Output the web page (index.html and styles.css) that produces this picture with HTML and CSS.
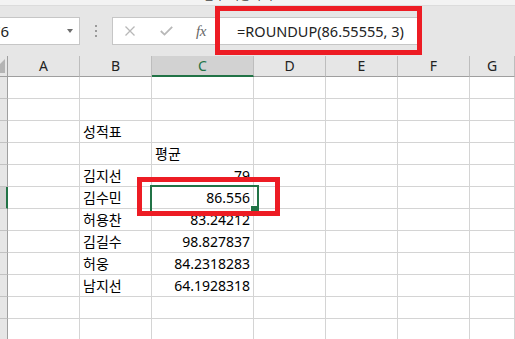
FILE: index.html
```html
<!DOCTYPE html>
<html lang="ko">
<head>
    <meta charset="UTF-8">
    <meta name="viewport" content="width=device-width, initial-scale=1.0">
    <title>ROUNDUP - Excel</title>
    <link rel="stylesheet" href="styles.css">
</head>
<body>
    <div class="titlebar">
        <span class="title">함수 사용하기 - Excel</span>
    </div>

    <div class="formula-bar">
        <div class="name-box">
            <span class="name-text">C6</span>
            <span class="drop"></span>
        </div>
        <div class="grip">
            <svg width="2" height="12" viewBox="0 0 2 12">
                <rect x="0" y="0" width="2" height="2" fill="#9a9a9a"/>
                <rect x="0" y="5" width="2" height="2" fill="#9a9a9a"/>
                <rect x="0" y="10" width="2" height="2" fill="#9a9a9a"/>
            </svg>
        </div>
        <div class="fx-box">
            <svg class="btn-cancel" width="10" height="10" viewBox="0 0 10 10">
                <path d="M0.5 0.5 L9.5 9.5 M9.5 0.5 L0.5 9.5" stroke="#b8b8b8" stroke-width="1.3" fill="none"/>
            </svg>
            <svg class="btn-enter" width="13" height="10" viewBox="0 0 13 10">
                <path d="M0.8 5 L4.5 8.6 L12.2 0.8" stroke="#b8b8b8" stroke-width="1.8" fill="none"/>
            </svg>
            <span class="btn-fx">fx</span>
        </div>
        <div class="formula-input">=ROUNDUP(86.55555, 3)</div>
    </div>

    <div class="sheet">
        <div class="hd corner">
            <svg width="8" height="20" viewBox="0 0 8 20">
                <polygon points="5,3 5,17 -9,17" fill="#b4b4b4"/>
            </svg>
        </div>
        <div class="hd">A</div>
        <div class="hd">B</div>
        <div class="hd active">C</div>
        <div class="hd">D</div>
        <div class="hd">E</div>
        <div class="hd">F</div>
        <div class="hd">G</div>

        <!-- row 1 -->
        <div class="rh"></div><div class="cell"></div><div class="cell"></div><div class="cell"></div><div class="cell"></div><div class="cell"></div><div class="cell"></div><div class="cell"></div>
        <!-- row 2 -->
        <div class="rh"></div><div class="cell"></div><div class="cell"></div><div class="cell"></div><div class="cell"></div><div class="cell"></div><div class="cell"></div><div class="cell"></div>
        <!-- row 3 -->
        <div class="rh"></div><div class="cell"></div><div class="cell">성적표</div><div class="cell"></div><div class="cell"></div><div class="cell"></div><div class="cell"></div><div class="cell"></div>
        <!-- row 4 -->
        <div class="rh"></div><div class="cell"></div><div class="cell"></div><div class="cell">평균</div><div class="cell"></div><div class="cell"></div><div class="cell"></div><div class="cell"></div>
        <!-- row 5 -->
        <div class="rh"></div><div class="cell"></div><div class="cell">김지선</div><div class="cell num">79</div><div class="cell"></div><div class="cell"></div><div class="cell"></div><div class="cell"></div>
        <!-- row 6 (selected) -->
        <div class="rh active"></div><div class="cell"></div><div class="cell">김수민</div><div class="cell num sel">86.556</div><div class="cell"></div><div class="cell"></div><div class="cell"></div><div class="cell"></div>
        <!-- row 7 -->
        <div class="rh"></div><div class="cell"></div><div class="cell">허용찬</div><div class="cell num">83.24212</div><div class="cell"></div><div class="cell"></div><div class="cell"></div><div class="cell"></div>
        <!-- row 8 -->
        <div class="rh"></div><div class="cell"></div><div class="cell">김길수</div><div class="cell num">98.827837</div><div class="cell"></div><div class="cell"></div><div class="cell"></div><div class="cell"></div>
        <!-- row 9 -->
        <div class="rh"></div><div class="cell"></div><div class="cell">허웅</div><div class="cell num">84.2318283</div><div class="cell"></div><div class="cell"></div><div class="cell"></div><div class="cell"></div>
        <!-- row 10 -->
        <div class="rh"></div><div class="cell"></div><div class="cell">남지선</div><div class="cell num">64.1928318</div><div class="cell"></div><div class="cell"></div><div class="cell"></div><div class="cell"></div>
        <!-- row 11 -->
        <div class="rh"></div><div class="cell"></div><div class="cell"></div><div class="cell"></div><div class="cell"></div><div class="cell"></div><div class="cell"></div><div class="cell"></div>
        <!-- row 12 -->
        <div class="rh"></div><div class="cell"></div><div class="cell"></div><div class="cell"></div><div class="cell"></div><div class="cell"></div><div class="cell"></div><div class="cell"></div>
    </div>

    <!-- red annotation boxes -->
    <div class="mark mark-formula"></div>
    <div class="mark mark-cell"></div>
</body>
</html>
```

FILE: styles.css
```css
* {
    margin: 0;
    padding: 0;
    box-sizing: border-box;
}

body {
    position: relative;
    width: 515px;
    height: 339px;
    overflow: hidden;
    background: #fff;
    color: #000;
    font-family: "Noto Sans", "Noto Sans CJK KR", sans-serif;
}

.titlebar {
    height: 5px;
    overflow: hidden;
    background: #f3f3f3;
    text-align: center;
}

.title {
    display: block;
    margin-top: -11px;
    font-size: 12px;
    line-height: 14px;
    color: #444;
}

.formula-bar {
    display: flex;
    align-items: flex-start;
    height: 51px;
    padding-top: 11px;
    background: #e6e6e6;
    border-top: 1px solid #dcdcdc;
}

.name-box {
    display: flex;
    align-items: center;
    width: 80px;
    height: 28px;
    background: #fff;
    border: 1px solid #c6c6c6;
    border-left: 0;
}

.name-text {
    margin-left: -9px;
    font-size: 15px;
    color: #222;
}

.drop {
    margin-left: auto;
    margin-right: 6px;
    width: 0;
    height: 0;
    border-left: 3px solid transparent;
    border-right: 3px solid transparent;
    border-top: 4px solid #6d6d6d;
}

.grip {
    display: flex;
    align-items: center;
    justify-content: center;
    width: 32px;
    height: 28px;
}

.fx-box {
    display: flex;
    align-items: center;
    width: 104px;
    height: 28px;
    background: #fff;
    border: 1px solid #c6c6c6;
}

.btn-cancel {
    margin-left: 12px;
}

.btn-enter {
    margin-left: 25px;
}

.btn-fx {
    margin-left: 23px;
    font-family: "Liberation Serif", serif;
    font-style: italic;
    font-size: 15px;
    color: #666;
    letter-spacing: -0.5px;
}

.formula-input {
    width: 200px;
    height: 28px;
    margin-left: 3px;
    padding-left: 17px;
    background: #fff;
    border: 1px solid #c6c6c6;
    font-size: 14.5px;
    line-height: 26px;
    white-space: nowrap;
    color: #222;
}

.sheet {
    display: grid;
    grid-template-columns: 8px 72px 72px 102px 72px 72px 72px 1fr;
    grid-template-rows: 21px;
    grid-auto-rows: 22px;
}

.hd {
    background: #e6e6e6;
    border-right: 1px solid #bdbdbd;
    border-bottom: 1px solid #9f9f9f;
    text-align: center;
    font-size: 14px;
    line-height: 20px;
    color: #222;
}

.hd.corner {
    border-right-color: #9f9f9f;
}

.hd.corner svg {
    display: block;
}

.hd.active {
    background: #d2d2d2;
    color: #217346;
    border-bottom: 2px solid #217346;
}

.rh {
    background: #e6e6e6;
    border-right: 1px solid #9f9f9f;
    border-bottom: 1px solid #c2c2c2;
}

.rh.active {
    background: #d2d2d2;
    border-right: 2px solid #217346;
}

.cell {
    padding: 0 3px;
    border-right: 1px solid #d4d4d4;
    border-bottom: 1px solid #d4d4d4;
    font-size: 14px;
    line-height: 21px;
    white-space: nowrap;
}

.num {
    text-align: right;
}

.sel {
    position: relative;
}

.sel::after {
    content: "";
    position: absolute;
    left: -2px;
    top: -2px;
    width: 105px;
    height: 24px;
    border: 2px solid #217346;
}

.sel::before {
    content: "";
    position: absolute;
    right: -4px;
    bottom: -4px;
    width: 6px;
    height: 6px;
    background: #217346;
    border-left: 1px solid #fff;
    border-top: 1px solid #fff;
    z-index: 1;
}

.mark {
    position: absolute;
    border: 5px solid #ed1c24;
    z-index: 2;
}

.mark-formula {
    left: 215px;
    top: 6px;
    width: 207px;
    height: 49px;
}

.mark-cell {
    left: 137px;
    top: 177px;
    width: 143px;
    height: 39px;
}
```
